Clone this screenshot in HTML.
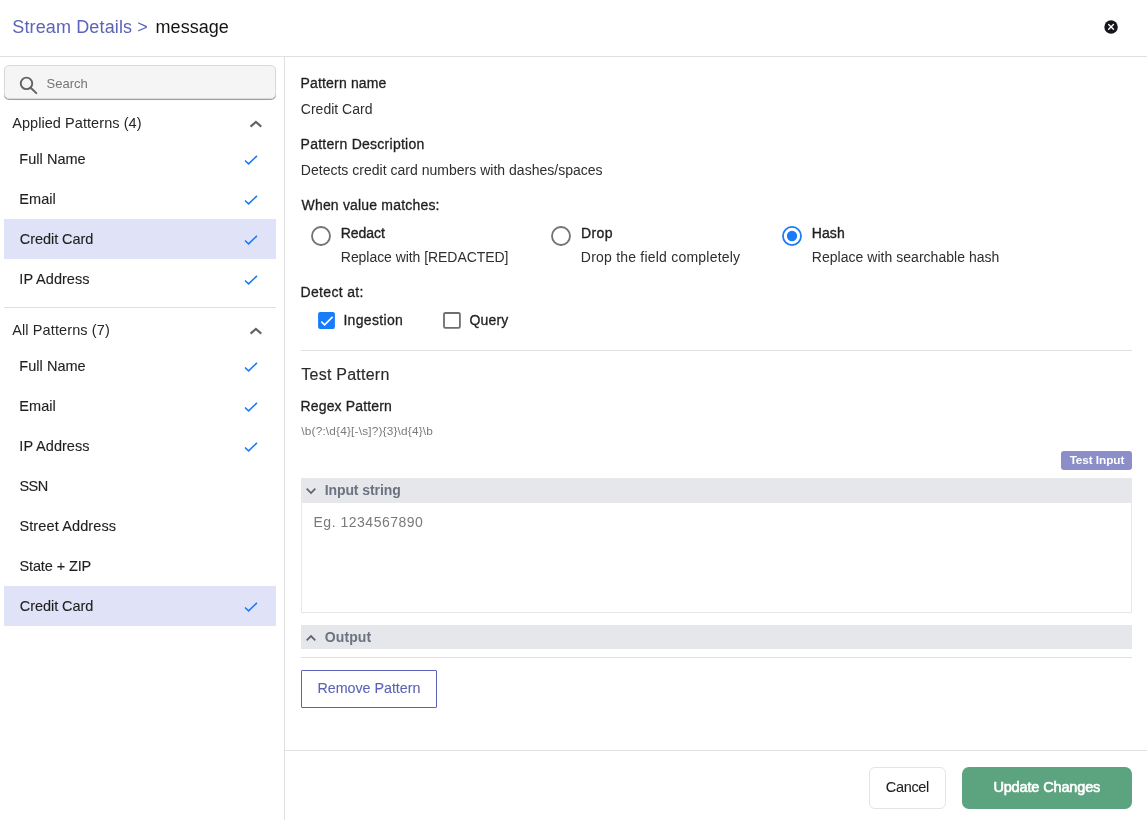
<!DOCTYPE html>
<html lang="en">
<head>
<meta charset="utf-8">
<title>Stream Details - message</title>
<style>
*{box-sizing:border-box;margin:0;padding:0}
html,body{width:1147px;height:820px;overflow:hidden;background:#fff}
body{font-family:"Liberation Sans",sans-serif;color:#1c1c1c;position:relative;font-size:14px}
#app{position:absolute;left:0;top:0;width:1147px;height:820px;will-change:transform}
.t{position:absolute;white-space:nowrap;line-height:1}
.abs{position:absolute}
.hdr{position:absolute;left:0;top:0;width:1147px;height:57px;border-bottom:1px solid #e0e0e0}
.side{position:absolute;left:0;top:57px;width:285px;height:763px;border-right:1px solid #e0e0e0}
.search{position:absolute;left:4px;top:65px;width:272px;height:34px;background:#f5f5f5;border:1px solid #dadada;border-radius:5px;box-shadow:0 1px 0 rgba(0,0,0,.3),0 1px 1px rgba(0,0,0,.12)}
.selrow{position:absolute;left:4px;width:272px;height:40px;background:#e0e3f7}
.hline{position:absolute;height:1px;background:#e0e0e0}
.bar{position:absolute;left:301px;width:831px;height:24px;background:#e5e7eb}
.box{position:absolute}
</style>
</head>
<body>
<div id="app">
<div class="hdr"></div>
<div class="t" id="title" style="left:12.30px;top:18.00px;font-size:18px;color:#5b64b7;letter-spacing:0.130px;">Stream Details &gt;</div>
<div class="t" id="msg" style="left:155.57px;top:18.00px;font-size:18px;color:#141414;letter-spacing:0.039px;">message</div>
<svg class="abs" style="left:1104px;top:20px" width="14" height="14" viewBox="0 0 14 14"><circle cx="7.05" cy="6.9" r="6.75" fill="#16151c"/><path d="M4.65 4.5 L9.45 9.3 M9.45 4.5 L4.65 9.3" stroke="#fff" stroke-width="1.35" stroke-linecap="round"/></svg>

<div class="side"></div>
<div class="search"></div>
<svg class="abs" style="left:19px;top:76px" width="20" height="20" viewBox="0 0 20 20"><circle cx="7.5" cy="7.4" r="5.75" fill="none" stroke="#636363" stroke-width="1.9"/><path d="M11.7 11.7 L17.3 17.1" stroke="#636363" stroke-width="2" stroke-linecap="round"/></svg>
<div class="t" id="search" style="left:46.49px;top:77.00px;font-size:13px;color:#757575;letter-spacing:0.005px;">Search</div>

<div class="t" id="sec1" style="left:12.15px;top:116.00px;font-size:14.5px;color:#262626;letter-spacing:0.065px;">Applied Patterns (4)</div>
<svg class="abs" style="left:249px;top:119px" width="14" height="10" viewBox="0 0 14 10"><path d="M1.55 7.6 L6.9 2.9 L12.25 7.6" fill="none" stroke="#636363" stroke-width="2.1"/></svg>

<div class="selrow" style="top:219px"></div>
<div class="t" id="a1" style="left:19.33px;top:152.00px;font-size:14.5px;color:#1f1f1f;letter-spacing:0.033px;-webkit-text-stroke:0.12px #1f1f1f;">Full Name</div><div class="t" id="a2" style="left:19.33px;top:192.00px;font-size:14.5px;color:#1f1f1f;letter-spacing:0.062px;-webkit-text-stroke:0.12px #1f1f1f;">Email</div><div class="t" id="a3" style="left:19.75px;top:232.00px;font-size:14.5px;color:#1f1f1f;letter-spacing:-0.053px;-webkit-text-stroke:0.12px #1f1f1f;">Credit Card</div><div class="t" id="a4" style="left:19.34px;top:272.00px;font-size:14.5px;color:#1f1f1f;letter-spacing:0.030px;-webkit-text-stroke:0.12px #1f1f1f;">IP Address</div>
<svg class="abs" style="left:244px;top:154px" width="14" height="11" viewBox="0 0 14 11"><path d="M0.95 6.5 L4.6 9.9 L12.95 1.85" fill="none" stroke="#1a7af7" stroke-width="1.55"/></svg>
<svg class="abs" style="left:244px;top:194px" width="14" height="11" viewBox="0 0 14 11"><path d="M0.95 6.5 L4.6 9.9 L12.95 1.85" fill="none" stroke="#1a7af7" stroke-width="1.55"/></svg>
<svg class="abs" style="left:244px;top:234px" width="14" height="11" viewBox="0 0 14 11"><path d="M0.95 6.5 L4.6 9.9 L12.95 1.85" fill="none" stroke="#1a7af7" stroke-width="1.55"/></svg>
<svg class="abs" style="left:244px;top:274px" width="14" height="11" viewBox="0 0 14 11"><path d="M0.95 6.5 L4.6 9.9 L12.95 1.85" fill="none" stroke="#1a7af7" stroke-width="1.55"/></svg>

<div class="hline" style="left:4px;top:307px;width:272px"></div>

<div class="t" id="sec2" style="left:12.15px;top:323.00px;font-size:14.5px;color:#262626;letter-spacing:0.120px;">All Patterns (7)</div>
<svg class="abs" style="left:249px;top:326px" width="14" height="10" viewBox="0 0 14 10"><path d="M1.55 7.6 L6.9 2.9 L12.25 7.6" fill="none" stroke="#636363" stroke-width="2.1"/></svg>

<div class="selrow" style="top:586px"></div>
<div class="t" id="b1" style="left:19.33px;top:359.00px;font-size:14.5px;color:#1f1f1f;letter-spacing:0.033px;-webkit-text-stroke:0.12px #1f1f1f;">Full Name</div><div class="t" id="b2" style="left:19.33px;top:399.00px;font-size:14.5px;color:#1f1f1f;letter-spacing:0.062px;-webkit-text-stroke:0.12px #1f1f1f;">Email</div><div class="t" id="b3" style="left:19.34px;top:439.00px;font-size:14.5px;color:#1f1f1f;letter-spacing:0.030px;-webkit-text-stroke:0.12px #1f1f1f;">IP Address</div><div class="t" id="b4" style="left:19.53px;top:479.00px;font-size:14.5px;color:#1f1f1f;letter-spacing:-0.605px;-webkit-text-stroke:0.12px #1f1f1f;">SSN</div><div class="t" id="b5" style="left:19.45px;top:519.00px;font-size:14.5px;color:#1f1f1f;letter-spacing:0.117px;-webkit-text-stroke:0.12px #1f1f1f;">Street Address</div><div class="t" id="b6" style="left:19.45px;top:559.00px;font-size:14.5px;color:#1f1f1f;letter-spacing:-0.110px;-webkit-text-stroke:0.12px #1f1f1f;">State + ZIP</div><div class="t" id="b7" style="left:19.75px;top:599.00px;font-size:14.5px;color:#1f1f1f;letter-spacing:-0.053px;-webkit-text-stroke:0.12px #1f1f1f;">Credit Card</div>
<svg class="abs" style="left:244px;top:361px" width="14" height="11" viewBox="0 0 14 11"><path d="M0.95 6.5 L4.6 9.9 L12.95 1.85" fill="none" stroke="#1a7af7" stroke-width="1.55"/></svg>
<svg class="abs" style="left:244px;top:401px" width="14" height="11" viewBox="0 0 14 11"><path d="M0.95 6.5 L4.6 9.9 L12.95 1.85" fill="none" stroke="#1a7af7" stroke-width="1.55"/></svg>
<svg class="abs" style="left:244px;top:441px" width="14" height="11" viewBox="0 0 14 11"><path d="M0.95 6.5 L4.6 9.9 L12.95 1.85" fill="none" stroke="#1a7af7" stroke-width="1.55"/></svg>
<svg class="abs" style="left:244px;top:601px" width="14" height="11" viewBox="0 0 14 11"><path d="M0.95 6.5 L4.6 9.9 L12.95 1.85" fill="none" stroke="#1a7af7" stroke-width="1.55"/></svg>

<!-- right pane -->
<div class="t" id="l1" style="left:300.56px;top:76.00px;font-size:14px;color:#1f1f1f;letter-spacing:0.163px;-webkit-text-stroke:0.3px #1f1f1f;">Pattern name</div><div class="t" id="v1" style="left:300.80px;top:102.00px;font-size:14px;color:#2e2e2e;letter-spacing:0.010px;">Credit Card</div><div class="t" id="l2" style="left:300.56px;top:137.00px;font-size:14px;color:#1f1f1f;letter-spacing:0.260px;-webkit-text-stroke:0.3px #1f1f1f;">Pattern Description</div><div class="t" id="v2" style="left:300.84px;top:163.00px;font-size:14px;color:#2e2e2e;letter-spacing:0.014px;">Detects credit card numbers with dashes/spaces</div><div class="t" id="l3" style="left:301.53px;top:198.00px;font-size:14px;color:#1f1f1f;letter-spacing:0.185px;-webkit-text-stroke:0.3px #1f1f1f;">When value matches:</div>

<svg class="abs" style="left:311px;top:226px" width="20" height="20" viewBox="0 0 20 20"><circle cx="10" cy="10" r="9.0" fill="#fff" stroke="#727272" stroke-width="1.85"/></svg>
<div class="t" id="r1" style="left:340.67px;top:226.00px;font-size:14px;color:#1f1f1f;letter-spacing:-0.035px;-webkit-text-stroke:0.35px #1f1f1f;">Redact</div><div class="t" id="r1d" style="left:340.84px;top:250.00px;font-size:14px;color:#2e2e2e;letter-spacing:-0.053px;">Replace with [REDACTED]</div>
<svg class="abs" style="left:551px;top:226px" width="20" height="20" viewBox="0 0 20 20"><circle cx="10" cy="10" r="9.0" fill="#fff" stroke="#727272" stroke-width="1.85"/></svg>
<div class="t" id="r2" style="left:581.07px;top:226.00px;font-size:14px;color:#1f1f1f;letter-spacing:0.340px;-webkit-text-stroke:0.35px #1f1f1f;">Drop</div><div class="t" id="r2d" style="left:580.84px;top:250.00px;font-size:14px;color:#2e2e2e;letter-spacing:0.216px;">Drop the field completely</div>
<svg class="abs" style="left:782px;top:226px" width="20" height="20" viewBox="0 0 20 20"><circle cx="10" cy="10" r="9.05" fill="#fff" stroke="#1a7af7" stroke-width="1.75"/><circle cx="10" cy="10" r="5.15" fill="#1a7af7"/></svg>
<div class="t" id="r3" style="left:811.67px;top:226.00px;font-size:14px;color:#1f1f1f;letter-spacing:0.139px;-webkit-text-stroke:0.35px #1f1f1f;">Hash</div><div class="t" id="r3d" style="left:811.84px;top:250.00px;font-size:14px;color:#2e2e2e;letter-spacing:0.028px;">Replace with searchable hash</div>

<div class="t" id="l4" style="left:300.56px;top:285.00px;font-size:14px;color:#1f1f1f;letter-spacing:0.335px;-webkit-text-stroke:0.3px #1f1f1f;">Detect at:</div>
<svg class="abs" style="left:318px;top:312px" width="18" height="18" viewBox="0 0 18 18"><rect x="0.1" y="0" width="16.8" height="16.9" rx="2" fill="#187bfa"/><path d="M3.3 9.6 L6.6 12.9 L14.6 4.9" fill="none" stroke="#fff" stroke-width="1.55"/></svg>
<div class="t" id="c1" style="left:343.42px;top:313.00px;font-size:14px;color:#1f1f1f;letter-spacing:0.324px;-webkit-text-stroke:0.3px #1f1f1f;">Ingestion</div>
<svg class="abs" style="left:443px;top:312px" width="19" height="18" viewBox="0 0 19 18"><rect x="1.0" y="1.0" width="15.9" height="14.9" rx="1.3" fill="#fff" stroke="#6e6e6e" stroke-width="1.8"/></svg>
<div class="t" id="c2" style="left:469.50px;top:313.00px;font-size:14px;color:#1f1f1f;letter-spacing:0.187px;-webkit-text-stroke:0.3px #1f1f1f;">Query</div>

<div class="hline" style="left:301px;top:350px;width:831px"></div>

<div class="t" id="tp" style="left:301.30px;top:367.00px;font-size:16px;color:#2a2a2a;letter-spacing:0.240px;-webkit-text-stroke:0.15px #2a2a2a;">Test Pattern</div><div class="t" id="rp" style="left:300.56px;top:399.00px;font-size:14px;color:#1f1f1f;letter-spacing:0.141px;-webkit-text-stroke:0.3px #1f1f1f;">Regex Pattern</div><div class="t" id="rx" style="left:301.34px;top:426.00px;font-size:11.8px;color:#7a7a7a;letter-spacing:0.188px;">\b(?:\d{4}[-\s]?){3}\d{4}\b</div>

<div class="box" style="left:1061px;top:451px;width:71px;height:19px;background:#8b8ec9;border-radius:3px"></div>
<div class="t" id="ti" style="left:1069.63px;top:455.00px;font-size:11.8px;color:#fff;font-weight:700;letter-spacing:-0.082px;">Test Input</div>

<div class="bar" style="top:478px"></div>
<svg class="abs" style="left:305px;top:486px" width="12" height="9" viewBox="0 0 12 9"><path d="M1.7 2.7 L6 7 L10.3 2.7" fill="none" stroke="#5d6371" stroke-width="1.75"/></svg>
<div class="t" id="is" style="left:324.63px;top:483.00px;font-size:14px;color:#6b7280;font-weight:700;letter-spacing:-0.075px;">Input string</div>
<div class="box" style="left:301px;top:502px;width:831px;height:111px;border:1px solid #e8e8e8"></div>
<div class="t" id="eg" style="left:313.53px;top:515.00px;font-size:14px;color:#7a7a7a;letter-spacing:0.508px;">Eg. 1234567890</div>

<div class="bar" style="top:625px"></div>
<svg class="abs" style="left:305px;top:633px" width="12" height="9" viewBox="0 0 12 9"><path d="M1.7 7.4 L6 3.1 L10.3 7.4" fill="none" stroke="#5d6371" stroke-width="1.75"/></svg>
<div class="t" id="out" style="left:324.78px;top:630.00px;font-size:14px;color:#6b7280;font-weight:700;letter-spacing:0.101px;">Output</div>

<div class="hline" style="left:301px;top:657px;width:831px"></div>

<div class="box" style="left:301px;top:670px;width:136px;height:38px;border:1px solid #5c62b8;border-radius:1px"></div>
<div class="t" id="rm" style="left:317.46px;top:681.00px;font-size:14.3px;color:#5a63b5;letter-spacing:-0.029px;-webkit-text-stroke:0.1px #5a63b5;">Remove Pattern</div>

<div class="hline" style="left:285px;top:750px;width:862px"></div>
<div class="box" style="left:869px;top:767px;width:77px;height:42px;border:1px solid #e4e4e4;border-radius:6px"></div>
<div class="t" id="cancel" style="left:885.74px;top:780.00px;font-size:14.5px;color:#1f1f1f;letter-spacing:-0.310px;-webkit-text-stroke:0.1px #1f1f1f;">Cancel</div>
<div class="box" style="left:962px;top:767px;width:170px;height:42px;background:#5ca37f;border-radius:7px"></div>
<div class="t" id="upd" style="left:993.39px;top:780.00px;font-size:14.5px;color:#fff;letter-spacing:-0.145px;-webkit-text-stroke:0.6px #fff;">Update Changes</div>
</div>
</body>
</html>
